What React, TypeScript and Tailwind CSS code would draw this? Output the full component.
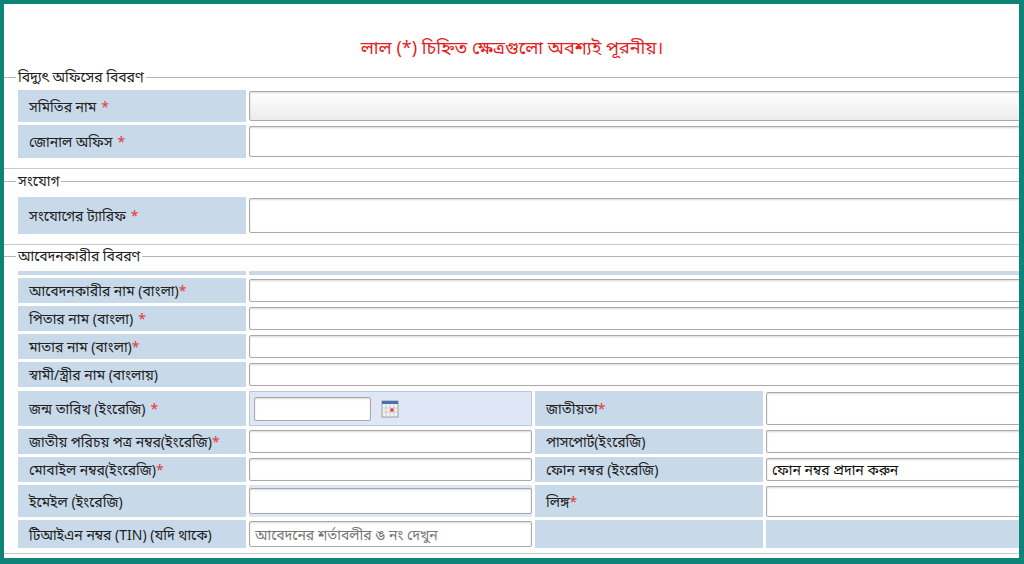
import React from "react";

const F = { fontFamily: '"Noto Sans", "Noto Sans Bengali", "Lohit Bengali", sans-serif' };

function Legend({ t }: { t: string }) {
  return (
    <div className="flex items-center h-[18px]">
      <div className="w-[12px] border-t border-[#b5b5b5]" />
      <span className="px-[2px] text-[14px] text-[#222] leading-none">{t}</span>
      <div className="flex-1 border-t border-[#b5b5b5]" />
    </div>
  );
}

const Star = () => <span className="text-[#e53935]">*</span>;

function Inp({ h, ph, val, w, grad }: { h: string; ph?: string; val?: string; w?: string; grad?: boolean }) {
  return (
    <div
      className={`${h} ${w ?? "w-full"} border border-[#a9a9a9] rounded-[2px] shadow-[inset_0_1px_2px_rgba(0,0,0,0.15)] flex items-center px-[5px] text-[14px] ${grad ? "bg-gradient-to-b from-white to-[#ececec]" : "bg-white"}`}
    >
      {ph && <span className="text-[#777]">{ph}</span>}
      {val && <span className="text-[#111]">{val}</span>}
    </div>
  );
}

function Row1({ label, star, h, grad }: { label: string; star?: "space" | "tight"; h: string; grad?: boolean }) {
  return (
    <div className={`flex gap-[3px] ${h}`}>
      <div className="w-[228px] bg-[#c8d9ea] flex items-center pl-[11px] text-[14px] text-[#222]">
        {label}
        {star === "space" && <span className="ml-[5px]"><Star /></span>}
        {star === "tight" && <Star />}
      </div>
      <div className="flex-1 bg-white flex items-center">
        <Inp h="h-[calc(100%-2px)]" grad={grad} />
      </div>
    </div>
  );
}

function Cell({ children, cls = "" }: { children?: React.ReactNode; cls?: string }) {
  return <div className={`bg-[#c8d9ea] flex items-center pl-[11px] text-[14px] text-[#222] ${cls}`}>{children}</div>;
}

export default function App() {
  return (
    <div className="w-[1024px] h-[564px] bg-[#0e8478] p-[4px] pr-[5px] overflow-hidden" style={F}>
      <div className="w-[1015px] h-[554px] bg-white overflow-hidden pt-[30px]">
        <div className="w-[1016px] text-center text-[#e31e24] text-[18px] leading-[26px] h-[28px]">
          লাল (*) চিহ্নিত ক্ষেত্রগুলো অবশ্যই পূরনীয়।
        </div>
        <div className="mt-[6px] w-[1040px]">
          <Legend t="বিদ্যুৎ অফিসের বিবরণ" />
          <div className="pl-[14px] pt-[4px] flex flex-col gap-[3px]">
            <Row1 label="সমিতির নাম" star="space" h="h-[32px]" grad />
            <Row1 label="জোনাল অফিস" star="space" h="h-[33px]" />
          </div>
          <div className="mt-[10px] border-t border-[#c8c8c8]" />
          <div className="mt-[3px]"><Legend t="সংযোগ" /></div>
          <div className="pl-[14px] mt-[7px]">
            <Row1 label="সংযোগের ট্যারিফ" star="space" h="h-[37px]" />
          </div>
          <div className="mt-[10px] border-t border-[#c8c8c8]" />
          <div className="mt-[2px]"><Legend t="আবেদনকারীর বিবরণ" /></div>
          <div className="pl-[14px] mt-[6px] flex flex-col gap-[3px]">
            <div className="h-[4px] flex gap-[3px]"><div className="w-[228px] bg-[#c8d9ea]" /><div className="flex-1 bg-[#c8d9ea]" /></div>
            <Row1 label="আবেদনকারীর নাম (বাংলা)" star="tight" h="h-[25px]" />
            <Row1 label="পিতার নাম (বাংলা)" star="space" h="h-[25px]" />
            <Row1 label="মাতার নাম (বাংলা)" star="tight" h="h-[25px]" />
            <Row1 label="স্বামী/স্ত্রীর নাম (বাংলায়)" h="h-[25px]" />
            <div className="grid grid-cols-[228px_283px_228px_1fr] gap-[3px] mt-[1px]" style={{ gridTemplateRows: "35px 25px 25px 32px 28px" }}>
              <Cell>জন্ম তারিখ (ইংরেজি)<span className="ml-[5px]"><Star /></span></Cell>
              <div className="bg-[#dfe6f5] border border-[#b8c8e0] flex items-center pl-[4px] gap-[10px]">
                <Inp h="h-[24px]" w="w-[117px]" />
                <svg width="18" height="18" viewBox="0 0 18 18">
                  <rect x="1" y="1" width="16" height="16" fill="#f3f3f3" stroke="#9a9a9a" />
                  <rect x="1" y="1" width="16" height="3" fill="#4a6fb5" />
                  {[5, 9, 13].map((x) => <line key={x} x1={x} y1="4" x2={x} y2="17" stroke="#ccc" />)}
                  {[8, 12].map((y) => <line key={y} x1="1" y1={y} x2="17" y2={y} stroke="#ccc" />)}
                  <rect x="9.5" y="8.5" width="3" height="3" fill="#d33" />
                </svg>
              </div>
              <Cell>জাতীয়তা<Star /></Cell>
              <div className="bg-white flex items-center"><Inp h="h-[33px]" /></div>

              <Cell>জাতীয় পরিচয় পত্র নম্বর(ইংরেজি)<Star /></Cell>
              <div className="bg-white flex items-center"><Inp h="h-[23px]" /></div>
              <Cell>পাসপোর্ট(ইংরেজি)</Cell>
              <div className="bg-white flex items-center"><Inp h="h-[23px]" /></div>

              <Cell>মোবাইল নম্বর(ইংরেজি)<Star /></Cell>
              <div className="bg-white flex items-center"><Inp h="h-[23px]" /></div>
              <Cell>ফোন নম্বর (ইংরেজি)</Cell>
              <div className="bg-white flex items-center"><Inp h="h-[23px]" val="ফোন নম্বর প্রদান করুন" /></div>

              <Cell>ইমেইল (ইংরেজি)</Cell>
              <div className="bg-[#dfe6f5] flex items-center"><Inp h="h-[26px]" /></div>
              <Cell>লিঙ্গ<Star /></Cell>
              <div className="bg-white flex items-center"><Inp h="h-[31px]" /></div>

              <Cell>টিআইএন নম্বর (TIN) (যদি থাকে)</Cell>
              <div className="bg-white flex items-center"><Inp h="h-[26px]" ph="আবেদনের শর্তাবলীর ঙ নং দেখুন" /></div>
              <Cell />
              <Cell />
            </div>
          </div>
          <div className="mt-[5px] border-t border-[#c8c8c8]" />
        </div>
      </div>
    </div>
  );
}
